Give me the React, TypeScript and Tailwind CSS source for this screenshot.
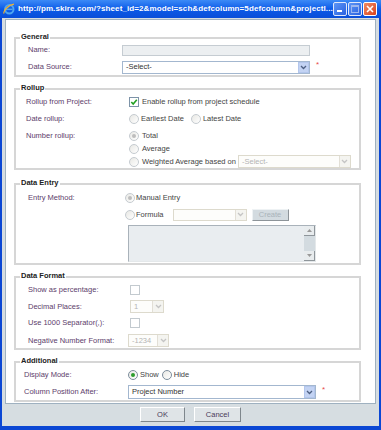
import React from "react";

const LBL = "text-[#5d3d6b]";
const CTL = "text-[#444]";

function Chevron({ color }: { color: string }) {
  return (
    <svg width="7" height="5" viewBox="0 0 7 5">
      <path d="M1 1 L3.5 3.5 L6 1" stroke={color} strokeWidth="1.3" fill="none" />
    </svg>
  );
}

function SelectBox({ className, text, disabled }: { className: string; text: string; disabled?: boolean }) {
  return (
    <div
      className={
        "flex items-stretch border " +
        (disabled ? "border-[#dddacd] bg-[#fdfdfb] " : "border-[#a3b7cf] bg-white ") +
        className
      }
    >
      <span
        className={
          "flex-1 flex items-center pl-[3px] overflow-hidden whitespace-nowrap " +
          (disabled ? "text-[#b4b4b4]" : "text-[#333]")
        }
      >
        {text}
      </span>
      {disabled ? (
        <span className="w-[11px] flex items-center justify-center border-l border-[#e2dfd6] bg-[#f4f4f0]">
          <Chevron color="#c4c4c4" />
        </span>
      ) : (
        <span className="w-[11px] flex items-center justify-center bg-[#c3d3f3] border border-[#b3c6ec]">
          <Chevron color="#4d5f82" />
        </span>
      )}
    </div>
  );
}

function Radio({ checked, green, enabled }: { checked?: boolean; green?: boolean; enabled?: boolean }) {
  return (
    <span
      className={
        "w-[10px] h-[10px] rounded-full border flex items-center justify-center shrink-0 bg-gradient-to-br from-[#e8e8e4] to-white " +
        (enabled ? "border-[#7c8d9c]" : "border-[#c5cbd0]")
      }
    >
      {checked && (
        <span className={"w-[4px] h-[4px] rounded-full " + (green ? "bg-[#2d9d2d]" : "bg-[#bdbdbd]")} />
      )}
    </span>
  );
}

function Check({ checked, enabled }: { checked?: boolean; enabled?: boolean }) {
  return (
    <span
      className={
        "w-[10px] h-[10px] border flex items-center justify-center shrink-0 bg-white " +
        (enabled ? "border-[#7d93a8]" : "border-[#c3cacf]")
      }
    >
      {checked && (
        <svg width="8" height="8" viewBox="0 0 8 8">
          <path d="M1.3 4 L3.2 6 L6.8 1.8" stroke="#22a022" strokeWidth="1.6" fill="none" />
        </svg>
      )}
    </span>
  );
}

function Group({ title, className, children }: { title: string; className: string; children: React.ReactNode }) {
  return (
    <div className={"relative ml-[8px] w-[347px] border-2 border-[#d6d6d6] flex flex-col " + className}>
      <span className="absolute left-[4px] top-[-7px] bg-white px-[1px] font-bold text-[#222] leading-[10px] text-[7.5px]">
        {title}
      </span>
      {children}
    </div>
  );
}

function Asterisk() {
  return <span className="text-[#e8474b] ml-[6px] -mt-[4px] text-[8px]">*</span>;
}

function TitleButton({ kind }: { kind: "min" | "max" | "close" }) {
  if (kind === "close") {
    return (
      <span className="w-[14px] h-[14px] rounded-[2px] border border-white bg-gradient-to-br from-[#f08a62] to-[#d8401a] flex items-center justify-center">
        <svg width="8" height="8" viewBox="0 0 8 8">
          <path d="M1 1 L7 7 M7 1 L1 7" stroke="white" strokeWidth="1.6" />
        </svg>
      </span>
    );
  }
  return (
    <span className="w-[14px] h-[14px] rounded-[2px] border border-[#dfe8fb] bg-gradient-to-br from-[#5d95f6] to-[#2a61e0] flex items-end justify-center">
      {kind === "min" ? (
        <span className="w-[5px] h-[2px] bg-white mb-[3px] mr-[2px]" />
      ) : (
        <span className="w-[8px] h-[8px] border border-[#9cb7ef] border-t-2 mb-[2px]" />
      )}
    </span>
  );
}

export default function App() {
  return (
    <div className="w-[381px] h-[430px] bg-[#0b47d4] flex flex-col font-['Liberation_Sans',Arial,sans-serif] text-[7.5px] leading-[10px]">
      {/* Title bar */}
      <div className="h-[18px] shrink-0 flex items-center bg-gradient-to-b from-[#3c8af6] via-[#0b5ae8] to-[#0a4ed8] pl-[3px] pr-[4px]">
        <svg width="12" height="12" viewBox="0 0 12 12" className="shrink-0">
          <circle cx="6.3" cy="6.3" r="4.2" fill="none" stroke="#4fa6f0" strokeWidth="2" />
          <rect x="3" y="5.6" width="6.5" height="1.5" fill="#4fa6f0" />
          <path d="M1 10.5 C0 8 5 2 11 1.2" stroke="#f0b030" strokeWidth="1.3" fill="none" />
        </svg>
        <span className="ml-[3px] text-white font-bold text-[8px] whitespace-nowrap overflow-hidden tracking-[0.1px]">
          http://pm.skire.com/?sheet_id=2&amp;model=sch&amp;defcolumn=5defcolumn&amp;projectI...
        </span>
        <div className="ml-auto flex gap-[1px]">
          <TitleButton kind="min" />
          <TitleButton kind="max" />
          <TitleButton kind="close" />
        </div>
      </div>

      {/* Frame */}
      <div className="flex-1 flex flex-col mx-[2px] mb-[4px] px-[3px] pt-[1px] bg-[#d6dde1]">
        <div className="h-[385px] shrink-0 bg-white border border-[#9fb1c0] pt-[17px] flex flex-col">
          {/* General */}
          <Group title="General" className="h-[40px] pt-[4px]">
            <div className="flex items-center h-[14px] pl-[12px]">
              <span className={"w-[94px] " + LBL}>Name:</span>
              <span className="w-[188px] h-[11px] border border-[#c5ccd2] bg-[#eceff1]" />
            </div>
            <div className="flex items-center h-[14px] pl-[12px] mt-[3px]">
              <span className={"w-[94px] " + LBL}>Data Source:</span>
              <SelectBox className="w-[188px] h-[13px]" text="-Select-" />
              <Asterisk />
            </div>
          </Group>

          {/* Rollup */}
          <Group title="Rollup" className="h-[82px] mt-[11px] pt-[6px]">
            <div className="flex items-center h-[12px] pl-[10px]">
              <span className={"w-[103px] " + LBL}>Rollup from Project:</span>
              <Check checked enabled />
              <span className={"ml-[3px] " + CTL}>Enable rollup from project schedule</span>
            </div>
            <div className="flex items-center h-[12px] pl-[10px] mt-[5px]">
              <span className={"w-[103px] " + LBL}>Date rollup:</span>
              <Radio />
              <span className={"ml-[2px] " + CTL}>Earliest Date</span>
              <span className="ml-[7px]">
                <Radio />
              </span>
              <span className={"ml-[2px] " + CTL}>Latest Date</span>
            </div>
            <div className="flex items-center h-[12px] pl-[10px] mt-[5px]">
              <span className={"w-[103px] " + LBL}>Number rollup:</span>
              <Radio checked />
              <span className={"ml-[3px] " + CTL}>Total</span>
            </div>
            <div className="flex items-center h-[12px] pl-[113px] mt-[1px]">
              <Radio />
              <span className={"ml-[3px] " + CTL}>Average</span>
            </div>
            <div className="flex items-center h-[13px] pl-[113px]">
              <Radio />
              <span className={"ml-[3px] " + CTL}>Weighted Average based on</span>
              <SelectBox className="w-[113px] h-[13px] ml-[2px]" text="-Select-" disabled />
            </div>
          </Group>

          {/* Data Entry */}
          <Group title="Data Entry" className="h-[82px] mt-[13px] pt-[7px]">
            <div className="flex items-center h-[12px] pl-[12px]">
              <span className={"w-[97px] " + LBL}>Entry Method:</span>
              <Radio checked />
              <span className={"ml-[1px] " + CTL}>Manual Entry</span>
            </div>
            <div className="flex items-center h-[13px] pl-[12px] mt-[4px]">
              <span className="w-[97px]" />
              <Radio />
              <span className={"ml-[1px] " + CTL}>Formula</span>
              <SelectBox className="w-[74px] h-[12px] ml-[9px]" text="" disabled />
              <span className="ml-[5px] w-[37px] h-[12px] flex items-center justify-center bg-[#d3dbe0] border-t border-l border-[#eef2f4] border-r border-b border-r-[#8d9499] border-b-[#8d9499] text-[#a9b3ba]">
                Create
              </span>
            </div>
            <div className="flex pl-[112px] mt-[4px]">
              <div className="w-[188px] h-[37px] flex border border-[#a9b2ba] border-r-[#e4e8ea] border-b-[#e4e8ea] bg-[#e9edf0]">
                <div className="flex-1" />
                <div className="w-[11px] flex flex-col bg-[#d3dbe0]">
                  <span className="h-[10px] flex items-center justify-center bg-[#e8ecee] border-r border-b border-[#8f969b]">
                    <svg width="5" height="3" viewBox="0 0 5 3">
                      <path d="M0 3 L2.5 0 L5 3Z" fill="#999" />
                    </svg>
                  </span>
                  <span className="flex-1" />
                  <span className="h-[10px] flex items-center justify-center bg-[#e8ecee] border-r border-b border-[#8f969b]">
                    <svg width="5" height="3" viewBox="0 0 5 3">
                      <path d="M0 0 L2.5 3 L5 0Z" fill="#999" />
                    </svg>
                  </span>
                </div>
              </div>
            </div>
          </Group>

          {/* Data Format */}
          <Group title="Data Format" className="h-[74px] mt-[11px] pt-[6px]">
            <div className="flex items-center h-[12px] pl-[12px]">
              <span className={"w-[102px] " + LBL}>Show as percentage:</span>
              <Check />
            </div>
            <div className="flex items-center h-[13px] pl-[12px] mt-[4px]">
              <span className={"w-[102px] " + LBL}>Decimal Places:</span>
              <SelectBox className="w-[34px] h-[13px]" text="1" disabled />
            </div>
            <div className="flex items-center h-[12px] pl-[12px] mt-[4px]">
              <span className={"w-[102px] " + LBL}>Use 1000 Separator(,):</span>
              <Check />
            </div>
            <div className="flex items-center h-[13px] pl-[12px] mt-[5px]">
              <span className={"w-[100px] " + LBL}>Negative Number Format:</span>
              <SelectBox className="w-[41px] h-[13px]" text="-1234" disabled />
            </div>
          </Group>

          {/* Additional */}
          <Group title="Additional" className="h-[41px] mt-[11px] pt-[6px]">
            <div className="flex items-center h-[12px] pl-[8px]">
              <span className={"w-[104px] " + LBL}>Display Mode:</span>
              <Radio checked green enabled />
              <span className={"ml-[2px] " + CTL}>Show</span>
              <span className="ml-[3px]">
                <Radio enabled />
              </span>
              <span className={"ml-[2px] " + CTL}>Hide</span>
            </div>
            <div className="flex items-center h-[14px] pl-[8px] mt-[4px]">
              <span className={"w-[104px] " + LBL}>Column Position After:</span>
              <SelectBox className="w-[188px] h-[14px]" text="Project Number" />
              <Asterisk />
            </div>
          </Group>
        </div>

        {/* Footer */}
        <div className="flex-1 flex justify-center items-start gap-[9px] pt-[3px]">
          <span className="w-[45px] h-[15px] flex items-center justify-center bg-[#dfe4e7] border-t border-l border-white border-r border-b border-r-[#7e868c] border-b-[#7e868c] text-[#4a3a5a]">
            OK
          </span>
          <span className="w-[47px] h-[15px] flex items-center justify-center bg-[#dfe4e7] border-t border-l border-white border-r border-b border-r-[#7e868c] border-b-[#7e868c] text-[#4a3a5a]">
            Cancel
          </span>
        </div>
      </div>
    </div>
  );
}
